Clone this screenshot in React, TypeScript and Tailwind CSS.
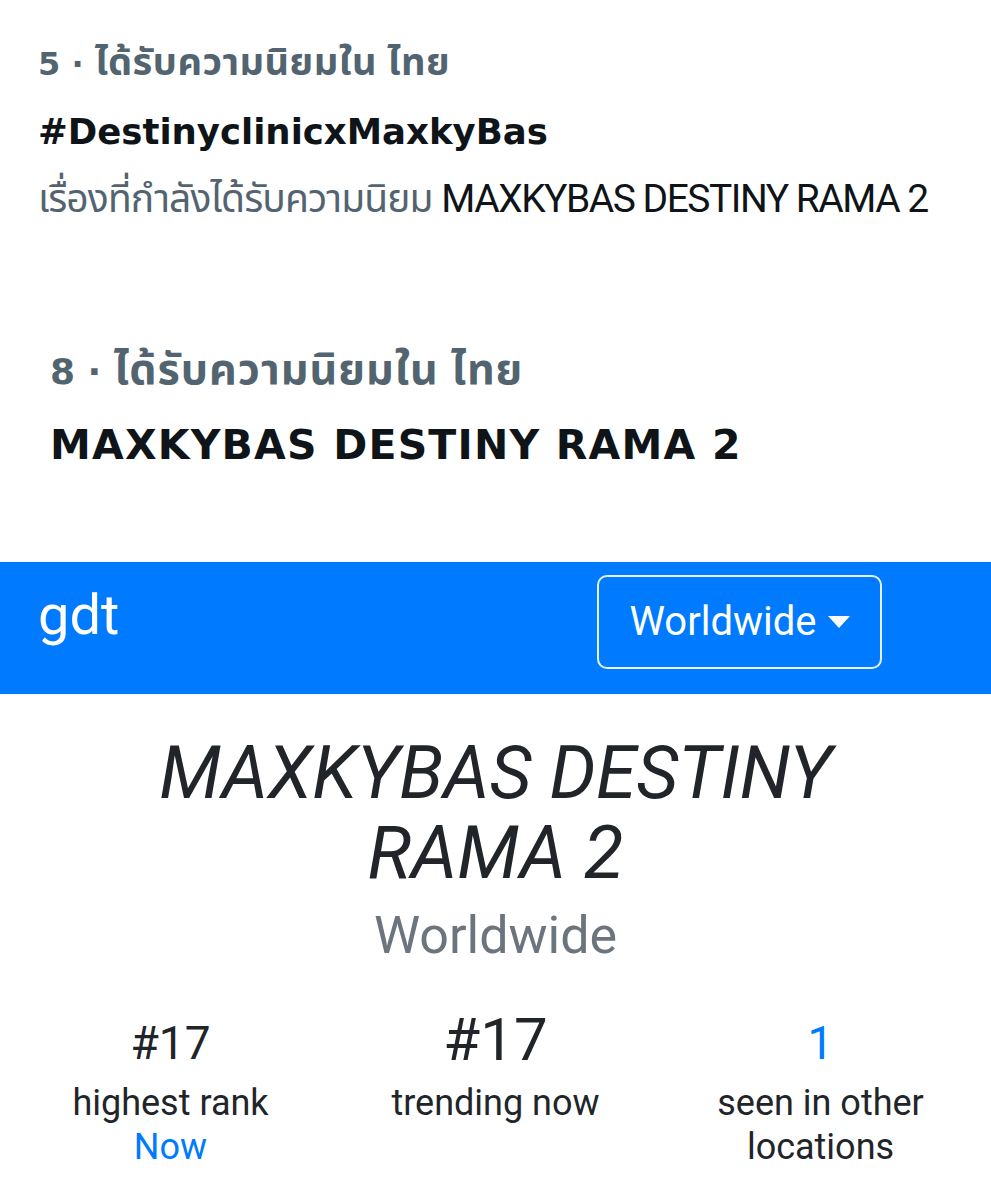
import React from "react";

const tw = { fontFamily: '"DejaVu Sans", "Noto Sans Thai", "Noto Sans", sans-serif' };
const rb = { fontFamily: 'Roboto, "Noto Sans Thai", "Noto Sans", "Liberation Sans", sans-serif' };
const th = { fontFamily: '"Noto Sans Thai", "Noto Sans", Roboto, sans-serif' };

export default function App() {
  return (
    <div className="w-[991px] h-[1200px] bg-white overflow-hidden" style={rb}>
      <div className="pl-[38px] pt-[44px]">
        <div style={tw} className="text-[32px] leading-[40px] font-bold text-[#536471] whitespace-nowrap">
          5 · <span style={th} className="text-[38px] tracking-[0.5px]">ได้รับความนิยมใน ไทย</span>
        </div>
        <div style={tw} className="mt-[25px] text-[35.5px] leading-[46px] font-bold text-[#0f1419]">#DestinyclinicxMaxkyBas</div>
        <div className="mt-[21px] text-[39px] leading-[46px] text-[#536471] tracking-[-0.9px] whitespace-nowrap">
          เรื่องที่กำลังได้รับความนิยม <span className="text-[#0f1419] tracking-[-1.5px]">MAXKYBAS DESTINY RAMA 2</span>
        </div>
      </div>
      <div className="pl-[50px] pt-[126px]">
        <div style={tw} className="text-[36px] leading-[46px] font-bold text-[#536471] whitespace-nowrap">
          8 · <span style={th} className="text-[43px] tracking-[1px]">ได้รับความนิยมใน ไทย</span>
        </div>
        <div style={tw} className="mt-[25px] text-[41px] leading-[50px] font-bold text-[#0f1419] tracking-[1.2px] whitespace-nowrap">MAXKYBAS DESTINY RAMA 2</div>
      </div>
      <div className="mt-[92px] h-[132px] bg-[#007bff] flex items-center justify-between pl-[38px] pr-[109px]">
        <div className="text-white text-[56px] leading-none -mt-[26px]">gdt</div>
        <div className="-mt-[12px] w-[285px] h-[94px] border-2 border-white/90 rounded-[10px] flex items-center justify-center text-white text-[40px] leading-none">
          Worldwide
          <svg width="22" height="12" viewBox="0 0 22 12" className="ml-[11px]"><path d="M0 0 L22 0 L11 12 Z" fill="white" /></svg>
        </div>
      </div>
      <div className="pt-[39px] flex flex-col items-center text-center">
        <div className="w-[780px] text-[73px] leading-[80px] italic text-[#212529]">MAXKYBAS DESTINY RAMA 2</div>
        <div className="mt-[13px] text-[52px] leading-[60px] text-[#6c757d]">Worldwide</div>
      </div>
      <div className="mt-[41px] px-[8px] grid grid-cols-3 items-start text-center text-[#212529]">
        <div className="flex flex-col items-center">
          <div className="mt-[8px] text-[46px] leading-[56px]">#17</div>
          <div className="mt-[10px] text-[36px] leading-[44px]">highest rank</div>
          <div className="text-[36px] leading-[44px] text-[#007bff]">Now</div>
        </div>
        <div className="flex flex-col items-center">
          <div className="text-[60px] leading-[66px]">#17</div>
          <div className="mt-[8px] text-[36px] leading-[44px]">trending now</div>
        </div>
        <div className="flex flex-col items-center">
          <div className="mt-[8px] text-[46px] leading-[56px] text-[#007bff]">1</div>
          <div className="mt-[10px] text-[36px] leading-[44px]">seen in other<br />locations</div>
        </div>
      </div>
    </div>
  );
}
